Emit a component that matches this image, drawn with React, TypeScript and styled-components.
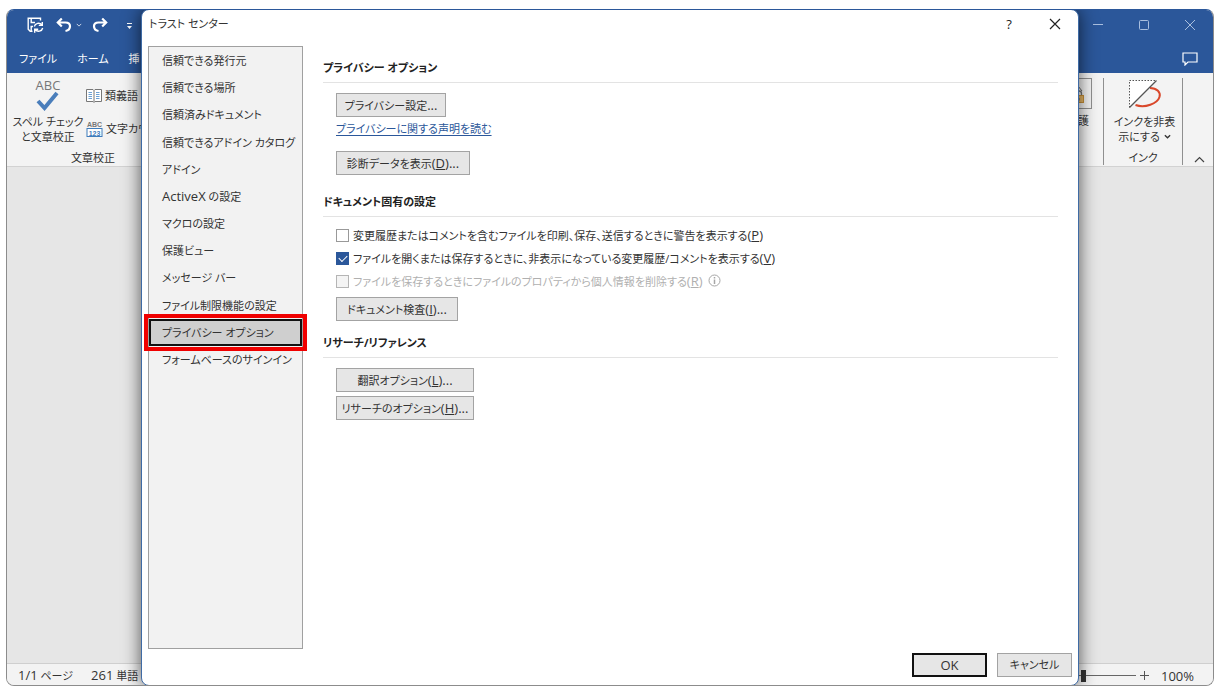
import React from "react";
import styled, { createGlobalStyle } from "styled-components";

const GlobalStyle = createGlobalStyle`
  * { box-sizing: border-box; }
  body {
    margin: 0;
    background: #fff;
    color: #333;
    font-family: "Open Sans", "Noto Sans CJK JP", sans-serif;
    font-size: 11px;
    line-height: 16px;
    font-feature-settings: "palt";
  }
  button, input { font: inherit; font-feature-settings: inherit; color: inherit; }
  button { padding: 0; border: 0; background: none; white-space: nowrap; }
  svg { display: block; flex: none; }
`;

const Latin = styled.span`
  font-size: 13px;
`;

const Screen = styled.div`
  display: flex;
  min-height: 100vh;
  padding: 9px 11px 6px 6px;
`;

const WordWindow = styled.div`
  position: relative;
  flex: 1;
  min-width: 0;
  display: flex;
  flex-direction: column;
  overflow: hidden;
  border: 1px solid #8c8c8c;
  border-top-color: #2b579a;
  border-radius: 8px;
  background: #e6e6e6;
`;

const TitleRow = styled.header`
  display: flex;
  justify-content: space-between;
  height: 31px;
  padding-bottom: 2px;
  background: #2b579a;
  color: #fff;
`;

const QuickAccess = styled.div`
  display: flex;
  align-items: center;
  padding-left: 20px;
`;

const ToolButton = styled.button<{ $gap: number }>`
  margin-right: ${(p) => p.$gap}px;
`;

const CaptionButtons = styled.div`
  display: flex;
`;

const CaptionButton = styled.button`
  display: flex;
  align-items: center;
  justify-content: center;
  width: 46px;
  color: #a9bfdf;
`;

const TabRow = styled.nav`
  display: flex;
  align-items: center;
  gap: 20px;
  height: 32px;
  padding: 4px 15px 0 12px;
  background: #2b579a;
  color: #fff;
`;

const Tab = styled.button`
  line-height: 16px;
`;

const CommentButton = styled.button`
  margin-left: auto;
`;

const Ribbon = styled.div`
  display: flex;
  height: 94px;
  background: #f3f3f3;
  border-bottom: 1px solid #d2d2d2;
`;

const RibbonGroup = styled.section<{ $width: number; $divided?: boolean }>`
  display: flex;
  flex-direction: column;
  justify-content: space-between;
  width: ${(p) => p.$width}px;
  margin: 5px 0 1px;
  border-right: 1px solid ${(p) => (p.$divided ? "#8f8f8f" : "transparent")};
`;

const GroupTools = styled.div<{ $centered?: boolean }>`
  display: flex;
  justify-content: ${(p) => (p.$centered ? "center" : "flex-start")};
`;

const GroupName = styled.div`
  line-height: 14px;
  text-align: center;
`;

const LargeTool = styled.button`
  display: flex;
  flex-direction: column;
  align-items: center;
  gap: 4px;
  min-width: 79px;
  padding-left: 3px;
  line-height: 15px;
`;

const ToolLine = styled.span`
  display: flex;
  align-items: center;
  justify-content: center;
  gap: 4px;
`;

const SpellIcon = styled.span`
  display: flex;
  flex-direction: column;
  align-items: center;
  height: 32px;
  padding-top: 1px;
  color: #777;
  font-size: 13px;
  line-height: 12px;
`;

const SmallTools = styled.div`
  display: flex;
  flex-direction: column;
  gap: 15px;
  padding-top: 10px;
`;

const SmallTool = styled.button`
  display: flex;
  align-items: center;
  gap: 3px;
`;

const ProtectTool = styled.button`
  display: flex;
  flex-direction: column;
  align-items: flex-end;
  gap: 4px;
  margin-left: auto;
  padding-right: 11px;
`;

const ProtectLabel = styled.span`
  padding-right: 3px;
`;

const LockFrame = styled.span`
  display: flex;
  align-items: center;
  justify-content: flex-end;
  width: 32px;
  height: 31px;
  padding-right: 6px;
  border: 1px solid #8f8f8f;
`;

const RibbonSpacer = styled.div`
  flex: 1;
`;

const CollapseButton = styled.button`
  align-self: flex-end;
  width: 30px;
  padding: 0 0 3px 11px;
`;

const DocumentArea = styled.main`
  flex: 1;
`;

const StatusBar = styled.footer`
  display: flex;
  align-items: center;
  gap: 18px;
  height: 22px;
  padding: 2px 19px 0 11px;
  border-top: 1px solid #cfcfcf;
  background: #f3f3f3;
`;

const Zoom = styled.div`
  display: flex;
  align-items: center;
  gap: 4px;
  margin-left: auto;
`;

const ZoomSlider = styled.input`
  appearance: none;
  width: 104px;
  height: 12px;
  margin: 0;
  background: linear-gradient(#666, #666) center / 100% 1px no-repeat;
  &::-webkit-slider-thumb {
    appearance: none;
    width: 5px;
    height: 12px;
    background: #333;
  }
`;

const ZoomValue = styled.span`
  margin-left: 8px;
  font-size: 13px;
`;

const Dialog = styled.div`
  position: absolute;
  inset: -1px 134px;
  display: flex;
  flex-direction: column;
  border: 1px solid #3f6ba5;
  border-radius: 8px;
  background: #fff;
  box-shadow: 0 0 18px rgba(0, 0, 0, 0.65);
`;

const DialogTitle = styled.div`
  display: flex;
  align-items: center;
  height: 36px;
  padding: 0 0 8px 7px;
`;

const TitleText = styled.h1`
  flex: 1;
  margin: 0;
  font-size: 11px;
  font-weight: 400;
  line-height: 16px;
`;

const TitleButton = styled.button`
  display: flex;
  align-items: center;
  justify-content: center;
  width: 46px;
  height: 28px;
  color: #222;
  font-size: 13px;
`;

const DialogBody = styled.div`
  flex: 1;
  display: flex;
  padding-left: 6px;
`;

const Sidebar = styled.nav`
  width: 155px;
  border: 1px solid #a0a0a0;
  background: #f2f2f2;
`;

const CategoryList = styled.ul`
  display: grid;
  grid-template-columns: minmax(0, 1fr);
  grid-auto-rows: 1fr;
  height: 326px;
  margin: 0;
  padding: 0;
  list-style: none;
`;

const Category = styled.li`
  position: relative;
  display: flex;
`;

const CategoryButton = styled.button<{ $selected: boolean }>`
  flex: 1;
  padding: 1px 0 0 11px;
  border: 2px solid ${(p) => (p.$selected ? "#111" : "transparent")};
  background: ${(p) => (p.$selected ? "#cfcfcf" : "transparent")};
  text-align: left;
`;

const HighlightFrame = styled.span`
  position: absolute;
  inset: -5px;
  border: 4px solid #f00000;
  pointer-events: none;
`;

const Panel = styled.div`
  flex: 1;
  padding: 0 20px;
`;

const SectionTitle = styled.h2`
  margin: 0;
  padding: 13px 0 5px;
  border-bottom: 1px solid #e3e3e3;
  color: #222;
  font-size: 11px;
  font-weight: 700;
  line-height: 18px;
`;

const SectionBody = styled.div<{ $compact?: boolean }>`
  display: flex;
  flex-direction: column;
  align-items: flex-start;
  gap: 4px;
  padding: ${(p) => (p.$compact ? "7px 0 0 13px" : "10px 0 5px 13px")};
`;

const PushButton = styled.button<{ $width: number; $primary?: boolean }>`
  width: ${(p) => p.$width}px;
  height: 24px;
  border: ${(p) => (p.$primary ? "2px solid #111" : "1px solid #a3a3a3")};
  background: #e6e6e6;
`;

const StatementLink = styled.a`
  margin-bottom: 10px;
  color: #2b579a;
  text-decoration: underline;
  text-underline-offset: 2px;
`;

const CheckList = styled.div`
  display: flex;
  flex-direction: column;
`;

const CheckRow = styled.label<{ $disabled?: boolean }>`
  display: flex;
  align-items: center;
  gap: 4px;
  height: 23px;
  color: ${(p) => (p.$disabled ? "#b0b0b0" : "#333")};
`;

const CheckBox = styled.input`
  appearance: none;
  display: grid;
  place-items: center;
  width: 13px;
  height: 13px;
  margin: 0;
  border: 1px solid #999;
  background: #fff;
  &:disabled {
    border-color: #b5b5b5;
    background: #f4f4f4;
  }
  &:checked {
    border-color: #2b579a;
    background: #2b579a;
  }
  &:checked::after {
    content: "";
    width: 7px;
    height: 4px;
    margin-bottom: 2px;
    border: solid #fff;
    border-width: 0 0 1px 1px;
    transform: rotate(-45deg);
  }
`;

const DialogFooter = styled.div`
  display: flex;
  justify-content: flex-end;
  gap: 10px;
  padding: 4px 6px 8px;
`;

const categories: React.ReactNode[] = [
  "信頼できる発行元",
  "信頼できる場所",
  "信頼済みドキュメント",
  "信頼できるアドイン カタログ",
  "アドイン",
  <><Latin>ActiveX</Latin> の設定</>,
  "マクロの設定",
  "保護ビュー",
  "メッセージ バー",
  "ファイル制限機能の設定",
  "プライバシー オプション",
  "フォームベースのサインイン",
];
const selectedIndex = 10;

const AccessKey = ({ letter, more = false }: { letter: string; more?: boolean }) => (
  <Latin>
    (<u>{letter}</u>){more && "..."}
  </Latin>
);

const Chevron = ({ size = 6, width = 1 }: { size?: number; width?: number }) => (
  <svg width={size} height={size} viewBox="0 0 8 8" fill="none" stroke="currentColor" strokeWidth={width}>
    <path d="M1 2.5 4 5.5 7 2.5" />
  </svg>
);

const SaveIcon = () => (
  <svg width="17" height="16" viewBox="0 0 17 16" fill="none" stroke="#fff" strokeWidth="1.4">
    <path d="M5.500 14.300H3.200L1.200 12.300V1.200H13.500V3.500" />
    <path d="M4.200 1.500V5.500H8M4.200 14V9.500H6" />
    <path d="M7.300 9.500A4.200 4.200 0 0 1 14.800 8M15.300 5V8.400H11.800M15.700 11A4.200 4.200 0 0 1 8.200 12.500M7.700 15.700V12.200H11.200" />
  </svg>
);

const UndoIcon = ({ flip = false }: { flip?: boolean }) => (
  <svg width="16" height="16" viewBox="0 0 16 16" fill="none" stroke="#fff" strokeWidth="2.2">
    <g transform={flip ? "matrix(-1 0 0 1 16 0)" : undefined}>
      <path d="M5.800 1.500 1.800 5.500 5.800 9.500M2 5.500H9.500C12.500 5.500 14 7.300 14 9.300 14 11.500 12.500 13.500 9.500 14" />
    </g>
  </svg>
);

const InkIcon = () => (
  <svg width="34" height="32" viewBox="0 0 34 32" fill="none">
    <path d="M1.500 29.500V2.500H28.500Z" fill="#fff" />
    <path d="M1.500 29.500V2.500H28.500" stroke="#555" strokeDasharray="1.500 1.500" />
    <path d="M22 10C29 10 33 14.500 31.500 19 29.500 25.500 17 30.500 7.500 27" stroke="#d9482b" strokeWidth="2" />
    <path d="M28.500 2.500 1.500 29.500" stroke="#555" strokeWidth="1.200" />
  </svg>
);

const BookIcon = () => (
  <svg width="16" height="14" viewBox="0 0 16 14" fill="#fff">
    <path d="M.5 .5H7L8 1.500 9 .5H15.500V12.500H9L8 13.500 7 12.500H.5Z" stroke="#777" />
    <path d="M8 1.500V13" stroke="#777" />
    <path d="M2.500 3.500H6M2.500 5.500H6M2.500 7.500H6M2.500 9.500H6M10 3.500H13.500M10 5.500H13.500M10 7.500H13.500M10 9.500H13.500" stroke="#6ba0d4" />
  </svg>
);

const CountIcon = () => (
  <svg width="17" height="20" viewBox="0 0 17 20" fontFamily="Liberation Sans, sans-serif" fontWeight="700" textAnchor="middle">
    <text x="8.500" y="8" fontSize="7" fill="#777">ABC</text>
    <rect x="1" y="9.500" width="15" height="8" fill="#fff" stroke="#3e7cbc" />
    <text x="8.500" y="16.500" fontSize="7" fill="#3e7cbc">123</text>
  </svg>
);

const LockIcon = () => (
  <svg width="12" height="18" viewBox="0 0 12 18" fill="none">
    <path d="M1 5 5 1 9 6" stroke="#666" />
    <path d="M3.500 11V8.500A2.500 2.500 0 0 1 8.500 8.500V11" stroke="#777" strokeWidth="1.300" />
    <rect x="1.500" y="10.500" width="9" height="7" fill="#e8b765" stroke="#c99239" />
    <path d="M6 13V15.500" stroke="#555" />
  </svg>
);

const InfoIcon = () => (
  <svg width="13" height="13" viewBox="0 0 13 13" fill="none" stroke="#a6a6a6">
    <circle cx="6.500" cy="6.500" r="5.500" />
    <path d="M6.500 5.500V10M6.500 3V4.500" strokeWidth="1.500" />
  </svg>
);

const InfoSlot = styled.span`
  margin-left: 1px;
  padding-bottom: 3px;
`;

export default function App() {
  return (
    <Screen>
      <GlobalStyle />
      <WordWindow>
        <TitleRow>
          <QuickAccess>
            <ToolButton $gap={12} aria-label="上書き保存"><SaveIcon /></ToolButton>
            <ToolButton $gap={4} aria-label="元に戻す"><UndoIcon /></ToolButton>
            <ToolButton $gap={10} aria-label="元に戻す一覧"><Chevron /></ToolButton>
            <ToolButton $gap={18} aria-label="やり直し"><UndoIcon flip /></ToolButton>
            <ToolButton $gap={0} aria-label="カスタマイズ">
              <svg width="7" height="8" viewBox="0 0 7 8" fill="#fff">
                <path d="M1 2H6V3H1ZM1 5H6L3.500 8Z" />
              </svg>
            </ToolButton>
          </QuickAccess>
          <CaptionButtons>
            <CaptionButton aria-label="最小化">
              <svg width="12" height="12" viewBox="0 0 12 12" stroke="currentColor"><path d="M1 5.500H11" /></svg>
            </CaptionButton>
            <CaptionButton aria-label="最大化">
              <svg width="12" height="12" viewBox="0 0 12 12" fill="none" stroke="currentColor"><rect x="1.500" y="1.500" width="9" height="9" rx="1" /></svg>
            </CaptionButton>
            <CaptionButton aria-label="ウィンドウを閉じる">
              <svg width="12" height="12" viewBox="0 0 12 12" stroke="currentColor"><path d="M1 1 11 11M11 1 1 11" /></svg>
            </CaptionButton>
          </CaptionButtons>
        </TitleRow>
        <TabRow>
          <Tab>ファイル</Tab>
          <Tab>ホーム</Tab>
          <Tab>挿</Tab>
          <CommentButton aria-label="コメント">
            <svg width="16" height="14" viewBox="0 0 16 14" fill="none" stroke="#fff" strokeWidth="1.200">
              <path d="M1 1H15V10H6L3 13V10H1Z" />
            </svg>
          </CommentButton>
        </TabRow>
        <Ribbon>
          <RibbonGroup $width={173}>
            <GroupTools>
              <LargeTool>
                <SpellIcon>
                  ABC
                  <svg width="26" height="20" viewBox="0 0 26 20" fill="none" stroke="#4a7ebb" strokeWidth="4">
                    <path d="M3 10 9.500 17 22 2" />
                  </svg>
                </SpellIcon>
                <span>
                  <ToolLine>スペル チェック</ToolLine>
                  <ToolLine>と文章校正</ToolLine>
                </span>
              </LargeTool>
              <SmallTools>
                <SmallTool><BookIcon />類義語</SmallTool>
                <SmallTool><CountIcon />文字カウ</SmallTool>
              </SmallTools>
            </GroupTools>
            <GroupName>文章校正</GroupName>
          </RibbonGroup>
          <RibbonSpacer />
          <RibbonGroup $width={60} $divided>
            <ProtectTool>
              <LockFrame><LockIcon /></LockFrame>
              <ProtectLabel>護</ProtectLabel>
            </ProtectTool>
          </RibbonGroup>
          <RibbonGroup $width={79} $divided>
            <GroupTools $centered>
              <LargeTool>
                <InkIcon />
                <span>
                  <ToolLine>インクを非表</ToolLine>
                  <ToolLine>示にする<Chevron size={7} width={1.5} /></ToolLine>
                </span>
              </LargeTool>
            </GroupTools>
            <GroupName>インク</GroupName>
          </RibbonGroup>
          <CollapseButton aria-label="リボンを折りたたむ">
            <svg width="11" height="7" viewBox="0 0 11 7" fill="none" stroke="#444" strokeWidth="1.200"><path d="M1 6 5.500 1.500 10 6" /></svg>
          </CollapseButton>
        </Ribbon>
        <DocumentArea />
        <StatusBar>
          <span><Latin>1/1</Latin> ページ</span>
          <span><Latin>261</Latin> 単語</span>
          <Zoom>
            <ZoomSlider type="range" min={10} max={190} defaultValue={100} aria-label="ズーム" />
            <svg width="9" height="9" viewBox="0 0 9 9" stroke="#555"><path d="M0 4.500H9M4.500 0V9" /></svg>
            <ZoomValue>100%</ZoomValue>
          </Zoom>
        </StatusBar>

        <Dialog role="dialog" aria-labelledby="dialog-title">
          <DialogTitle>
            <TitleText id="dialog-title">トラスト センター</TitleText>
            <TitleButton>?</TitleButton>
            <TitleButton aria-label="閉じる">
              <svg width="12" height="12" viewBox="0 0 12 12" stroke="currentColor" strokeWidth="1.200"><path d="M1 1 11 11M11 1 1 11" /></svg>
            </TitleButton>
          </DialogTitle>
          <DialogBody>
            <Sidebar>
              <CategoryList>
                {categories.map((name, index) => (
                  <Category key={index}>
                    <CategoryButton $selected={index === selectedIndex}>{name}</CategoryButton>
                    {index === selectedIndex && <HighlightFrame />}
                  </Category>
                ))}
              </CategoryList>
            </Sidebar>
            <Panel>
              <section>
                <SectionTitle>プライバシー オプション</SectionTitle>
                <SectionBody>
                  <PushButton $width={110}>プライバシー設定<Latin>...</Latin></PushButton>
                  <StatementLink href="#privacy">プライバシーに関する声明を読む</StatementLink>
                  <PushButton $width={134}>診断データを表示<AccessKey letter="D" more /></PushButton>
                </SectionBody>
              </section>
              <section>
                <SectionTitle>ドキュメント固有の設定</SectionTitle>
                <SectionBody $compact>
                  <CheckList>
                    <CheckRow>
                      <CheckBox type="checkbox" />
                      <span>変更履歴またはコメントを含むファイルを印刷、保存、送信するときに警告を表示する<AccessKey letter="P" /></span>
                    </CheckRow>
                    <CheckRow>
                      <CheckBox type="checkbox" defaultChecked />
                      <span>ファイルを開くまたは保存するときに、非表示になっている変更履歴/コメントを表示する<AccessKey letter="V" /></span>
                    </CheckRow>
                    <CheckRow $disabled>
                      <CheckBox type="checkbox" disabled />
                      <span>ファイルを保存するときにファイルのプロパティから個人情報を削除する<AccessKey letter="R" /></span>
                      <InfoSlot><InfoIcon /></InfoSlot>
                    </CheckRow>
                  </CheckList>
                  <PushButton $width={122}>ドキュメント検査<AccessKey letter="I" more /></PushButton>
                </SectionBody>
              </section>
              <section>
                <SectionTitle>リサーチ/リファレンス</SectionTitle>
                <SectionBody>
                  <PushButton $width={138}>翻訳オプション<AccessKey letter="L" more /></PushButton>
                  <PushButton $width={138}>リサーチのオプション<AccessKey letter="H" more /></PushButton>
                </SectionBody>
              </section>
            </Panel>
          </DialogBody>
          <DialogFooter>
            <PushButton $width={75} $primary><Latin>OK</Latin></PushButton>
            <PushButton $width={75}>キャンセル</PushButton>
          </DialogFooter>
        </Dialog>
      </WordWindow>
    </Screen>
  );
}
